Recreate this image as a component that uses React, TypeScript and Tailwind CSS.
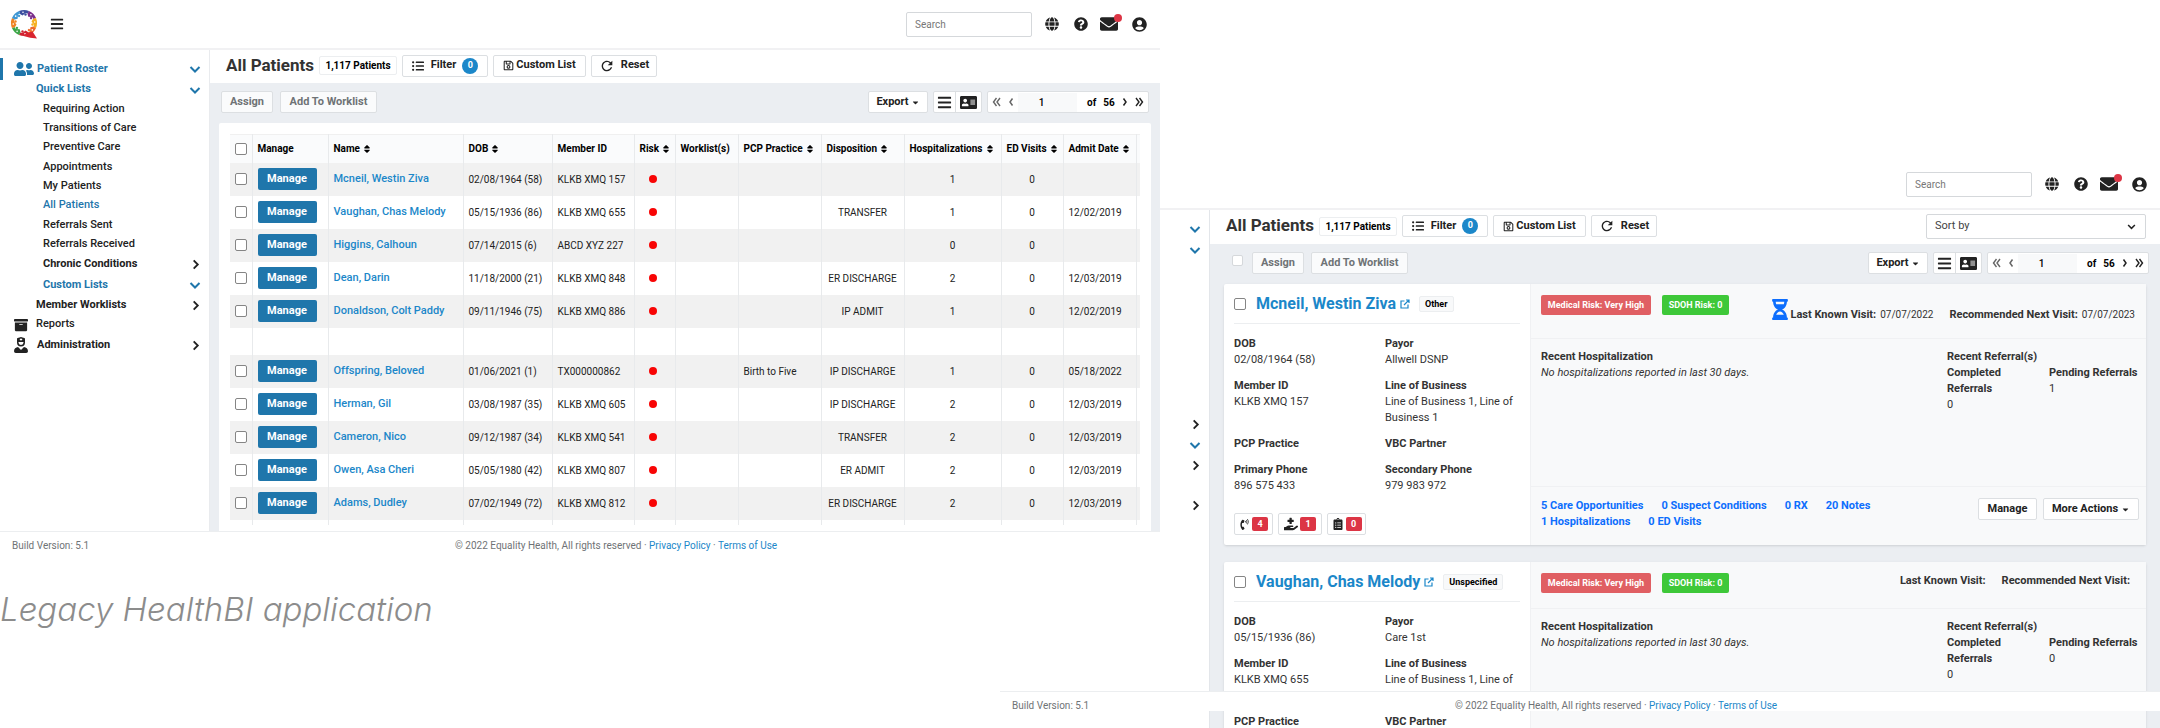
import type { ReactNode } from "react";
import { FaUserFriends, FaArchive, FaGlobe, FaQuestionCircle, FaEnvelope, FaUserCircle, FaBars, FaListUl, FaRegSave, FaSort, FaAddressCard, FaCaretDown, FaUserNurse, FaHourglassHalf, FaHandHoldingMedical, FaClipboardList, FaPhoneVolume } from "react-icons/fa";
import { MdRefresh } from "react-icons/md";

type Tone = "blue" | "dark";

function Chevron({ dir, tone = "dark", size = 12 }: { dir: "down" | "right"; tone?: Tone; size?: number }) {
  const d = dir === "down" ? "M3 8l9 9 9-9" : "M8 3l9 9-9 9";
  const color = tone === "blue" ? "text-[#1f76ab]" : "text-[#222]";
  return (
    <svg width={size} height={size} viewBox="0 0 24 24" fill="none" stroke="currentColor" strokeWidth="4" className={color}>
      <path d={d} />
    </svg>
  );
}

function DoubleAngle({ flip = false }: { flip?: boolean }) {
  return (
    <svg width="9" height="10" viewBox="0 0 18 20" fill="none" stroke="currentColor" strokeWidth="2.8" className={flip ? "text-[#666]" : "text-[#222]"}>
      <path d={flip ? "M9 2L3 10l6 8M16 2l-6 8 6 8" : "M2 2l6 8-6 8M9 2l6 8-6 8"} />
    </svg>
  );
}

function SingleAngle({ flip = false }: { flip?: boolean }) {
  return (
    <svg width="6" height="10" viewBox="0 0 12 20" fill="none" stroke="currentColor" strokeWidth="3" className={flip ? "text-[#666]" : "text-[#222]"}>
      <path d={flip ? "M9 3l-5 7 5 7" : "M3 3l5 7-5 7"} />
    </svg>
  );
}

function Logo() {
  const parts = [
    { a: 0, c: "#3b4f9f" },
    { a: 45, c: "#7b2f8c" },
    { a: 90, c: "#f5b01f" },
    { a: 135, c: "#ee6a2a" },
    { a: 180, c: "#d0202f" },
    { a: 225, c: "#3da648" },
    { a: 270, c: "#f08322" },
    { a: 315, c: "#3f97d3" },
  ];
  return (
    <svg width="28" height="30" viewBox="0 0 56 60" role="img" aria-label="Equality Health">
      {parts.map((p) => (
        <g key={p.a} transform={`rotate(${p.a} 28 28)`}>
          <path d="M18 4A26 26 0 0 1 38 4L36 9L31 8L25 13L20 10Z" fill={p.c} />
          <circle cx="31" cy="11" r="2.400" fill={p.c} />
          <circle cx="26" cy="6.500" r="1.600" fill="#fff" />
        </g>
      ))}
      <path d="M32 49L45 45L54 59Q40 58 27 54Z" fill="#d9242f" />
    </svg>
  );
}

function TopBar({ withBrand = false, id }: { withBrand?: boolean; id: string }) {
  return (
    <header className="flex h-[50px] items-center border-b-2 border-[#f1f1f3] bg-white pr-[13px] pl-[10px]">
      {withBrand && (
        <div className="flex items-center gap-3">
          <Logo />
          <button type="button" aria-label="Toggle menu">
            <FaBars className="size-[14px] text-[#222]" />
          </button>
        </div>
      )}
      <div className="ml-auto flex items-center">
        <input id={id} type="search" aria-label="Search" placeholder="Search" className="h-[25px] w-[126px] rounded-[2px] border border-[#d5d8db] bg-white px-2 text-[10px] placeholder:text-[#777]" />
        <button type="button" aria-label="Language" className="ml-[13px]"><FaGlobe className="size-[14px] text-[#222]" /></button>
        <button type="button" aria-label="Help" className="ml-[15px]"><FaQuestionCircle className="size-[14px] text-[#222]" /></button>
        <button type="button" aria-label="Messages" className="relative ml-[12px]">
          <FaEnvelope className="size-[18px] text-[#222]" />
          <span className="absolute -top-px -right-1 size-2 rounded-full bg-[#dc3545]" />
        </button>
        <button type="button" aria-label="Account" className="ml-[14px]"><FaUserCircle className="size-[15px] text-[#222]" /></button>
      </div>
    </header>
  );
}

const btnBase = "flex h-[22px] items-center justify-center rounded-[2px] border border-[#dcdfe2] font-bold text-[11px]";
const btn = btnBase + " bg-white text-[#222]";
const btnOff = btnBase + " bg-[#fafbfc] text-[#6f7376]";

function TitleBar({ sort = false }: { sort?: boolean }) {
  return (
    <div className={(sort ? "h-[34px]" : "h-[33px]") + " flex items-center bg-white pr-[14px] pb-[2px] pl-4"}>
      <h1 className="w-[93px] text-[17px] font-bold whitespace-nowrap text-[#333]">All Patients</h1>
      <span className="flex h-[19px] w-[78px] items-center justify-center rounded-[2px] border border-[#eceef0] text-[10px] font-bold">1,117 Patients</span>
      <button type="button" className={btn + " ml-[5px] w-[86px] gap-[7px]"}>
        <FaListUl className="size-3" />
        Filter
        <span className="-ml-px flex size-4 items-center justify-center rounded-full bg-[#1b87c9] text-[9px] text-white">0</span>
      </button>
      <button type="button" className={btn + " ml-[5px] w-[93px] gap-[2px]"}>
        <FaRegSave className="size-[11px]" />
        Custom List
      </button>
      <button type="button" className={btn + " ml-[5px] w-[66px] gap-[6px]"}>
        <MdRefresh className="size-4" />
        Reset
      </button>
      {sort && (
        <div className="relative ml-auto">
          <select aria-label="Sort by" className="block h-[25px] w-[220px] appearance-none rounded-[2px] border border-[#d5d8db] bg-white px-2 text-[11px] text-[#444]">
            <option>Sort by</option>
          </select>
          <span className="pointer-events-none absolute top-2 right-[10px]">
            <Chevron dir="down" size={9} />
          </span>
        </div>
      )}
    </div>
  );
}

function ActionBar({ selectAll = false }: { selectAll?: boolean }) {
  return (
    <div className="flex h-10 items-center pr-[11px] pb-[2px] pl-[11px]">
      {selectAll && <input type="checkbox" aria-label="Select all" className="mr-[9px] mb-[5px] ml-[11px] size-[11px] appearance-none rounded-[2px] border border-[#d5d8db] bg-white" />}
      <button type="button" disabled className={btnOff + " w-[52px]"}>Assign</button>
      <button type="button" disabled className={btnOff + " ml-[7px] w-[97px]"}>Add To Worklist</button>
      <button type="button" className={btn + " ml-auto w-[60px] gap-[2px]"}>
        Export
        <FaCaretDown className="size-[9px]" />
      </button>
      <div className="ml-[5px] flex h-[22px] w-[49px] rounded-[2px] border border-[#dcdfe2] bg-white">
        <button type="button" aria-label="List view" className="flex w-[22px] items-center justify-center border-r border-[#dcdfe2]"><FaBars className="size-[15px] text-[#222]" /></button>
        <button type="button" aria-label="Card view" className="flex flex-1 items-center justify-center"><FaAddressCard className="size-[17px] text-[#222]" /></button>
      </div>
      <div className="ml-[5px] flex h-[22px] w-[162px] items-center rounded-[2px] border border-[#dcdfe2] bg-white text-[10px] font-bold">
        <button type="button" aria-label="First page" className="ml-1"><DoubleAngle flip /></button>
        <button type="button" aria-label="Previous page" className="ml-[7px]"><SingleAngle flip /></button>
        <input type="text" aria-label="Page" defaultValue="1" className="ml-1 h-[19px] w-[59px] bg-[#f8f9fa] pr-3 text-center font-medium" />
        <span className="ml-[10px]">of</span>
        <span className="ml-[7px]">56</span>
        <button type="button" aria-label="Next page" className="ml-[7px]"><SingleAngle /></button>
        <button type="button" aria-label="Last page" className="ml-[7px]"><DoubleAngle /></button>
      </div>
    </div>
  );
}

const quickLists = ["Requiring Action", "Transitions of Care", "Preventive Care", "Appointments", "My Patients", "All Patients", "Referrals Sent", "Referrals Received"];

function Sidebar() {
  return (
    <nav className="w-[210px] shrink-0 border-r border-[#e9ebee] bg-white pt-2 text-[11px] font-medium text-[#222]">
      <a href="#roster" className="flex h-[22px] items-center border-l-3 border-[#1f76ab] pr-2 pl-[11px] font-bold text-[#1f76ab]">
        <FaUserFriends className="mr-[3px] size-5" />
        Patient Roster
        <span className="ml-auto"><Chevron dir="down" tone="blue" /></span>
      </a>
      <a href="#quick" className="flex h-[19px] items-center pr-2 pl-[36px] font-bold text-[#1f76ab]">
        Quick Lists
        <span className="ml-auto"><Chevron dir="down" tone="blue" /></span>
      </a>
      <ul className="pl-[43px]">
        {quickLists.map((q, i) => (
          <li key={q} className={i % 3 === 2 ? "h-5 leading-5" : "h-[19px] leading-[19px]"}>
            <a href="#list" className={q === "All Patients" ? "text-[#1f76ab]" : ""}>{q}</a>
          </li>
        ))}
      </ul>
      <a href="#chronic" className="flex h-[22px] items-center pr-2 pl-[43px] font-bold">
        Chronic Conditions
        <span className="ml-auto"><Chevron dir="right" size={11} /></span>
      </a>
      <a href="#custom" className="flex h-5 items-center pr-2 pl-[43px] font-bold text-[#1f76ab]">
        Custom Lists
        <span className="ml-auto"><Chevron dir="down" tone="blue" /></span>
      </a>
      <a href="#worklists" className="flex h-5 items-center pr-2 pl-[36px] font-bold">
        Member Worklists
        <span className="ml-auto"><Chevron dir="right" size={11} /></span>
      </a>
      <a href="#reports" className="flex h-[19px] items-center pl-[14px]">
        <FaArchive className="mr-2 size-[14px]" />
        Reports
      </a>
      <a href="#admin" className="flex h-[22px] items-center pr-2 pl-[13px] font-bold">
        <FaUserNurse className="mr-2 size-4" />
        Administration
        <span className="ml-auto"><Chevron dir="right" size={11} /></span>
      </a>
    </nav>
  );
}

interface Patient {
  name: string;
  dob: string;
  member: string;
  practice?: string;
  disposition?: string;
  hosp: number;
  admit?: string;
}

const patients: (Patient | null)[] = [
  { name: "Mcneil, Westin Ziva", dob: "02/08/1964 (58)", member: "KLKB XMQ 157", hosp: 1 },
  { name: "Vaughan, Chas Melody", dob: "05/15/1936 (86)", member: "KLKB XMQ 655", disposition: "TRANSFER", hosp: 1, admit: "12/02/2019" },
  { name: "Higgins, Calhoun", dob: "07/14/2015 (6)", member: "ABCD XYZ 227", hosp: 0 },
  { name: "Dean, Darin", dob: "11/18/2000 (21)", member: "KLKB XMQ 848", disposition: "ER DISCHARGE", hosp: 2, admit: "12/03/2019" },
  { name: "Donaldson, Colt Paddy", dob: "09/11/1946 (75)", member: "KLKB XMQ 886", disposition: "IP ADMIT", hosp: 1, admit: "12/02/2019" },
  null,
  { name: "Offspring, Beloved", dob: "01/06/2021 (1)", member: "TX000000862", practice: "Birth to Five", disposition: "IP DISCHARGE", hosp: 1, admit: "05/18/2022" },
  { name: "Herman, Gil", dob: "03/08/1987 (35)", member: "KLKB XMQ 605", disposition: "IP DISCHARGE", hosp: 2, admit: "12/03/2019" },
  { name: "Cameron, Nico", dob: "09/12/1987 (34)", member: "KLKB XMQ 541", disposition: "TRANSFER", hosp: 2, admit: "12/03/2019" },
  { name: "Owen, Asa Cheri", dob: "05/05/1980 (42)", member: "KLKB XMQ 807", disposition: "ER ADMIT", hosp: 2, admit: "12/03/2019" },
  { name: "Adams, Dudley", dob: "07/02/1949 (72)", member: "KLKB XMQ 812", disposition: "ER DISCHARGE", hosp: 2, admit: "12/03/2019" },
];

const columns: { label: string; sort?: boolean }[] = [
  { label: "Manage" },
  { label: "Name", sort: true },
  { label: "DOB", sort: true },
  { label: "Member ID" },
  { label: "Risk", sort: true },
  { label: "Worklist(s)" },
  { label: "PCP Practice", sort: true },
  { label: "Disposition", sort: true },
  { label: "Hospitalizations", sort: true },
  { label: "ED Visits", sort: true },
  { label: "Admit Date", sort: true },
];

const check = "block size-3 appearance-none rounded-[2px] border border-[#858585] bg-white";
const cell = "border-r border-[#e8eaec] pl-[5px]";

function PatientTable() {
  return (
    <table className="w-full table-fixed border-collapse text-left text-[10px] whitespace-nowrap text-[#222]">
      <colgroup>
        <col className="w-[22px]" />
        <col className="w-[76px]" />
        <col className="w-[135px]" />
        <col className="w-[89px]" />
        <col className="w-[82px]" />
        <col className="w-[41px]" />
        <col className="w-[63px]" />
        <col className="w-[83px]" />
        <col className="w-[83px]" />
        <col className="w-[97px]" />
        <col className="w-[62px]" />
        <col className="w-[73px]" />
        <col />
      </colgroup>
      <thead>
        <tr className="h-7 border-t border-[#f0f0f0] bg-[#fafbfc]">
          <th className={cell}><input type="checkbox" aria-label="Select all patients" className={check} /></th>
          {columns.map((c) => (
            <th key={c.label} className={cell + " text-black"}>
              <span className="flex items-center gap-[2px]">
                {c.label}
                {c.sort && <FaSort className="size-[10px] shrink-0" />}
              </span>
            </th>
          ))}
          <th />
        </tr>
      </thead>
      <tbody>
        {patients.map((p, i) =>
          p === null ? (
            <tr key={i} className="h-[27px]">
              {[...columns, null].map((_, k) => <td key={k} className={cell} />)}
              <td />
            </tr>
          ) : (
            <tr key={i} className={i % 2 === 0 ? "h-[33px] bg-[#f1f1f1]" : "h-[33px]"}>
              <td className={cell}><input type="checkbox" aria-label={"Select " + p.name} className={check} /></td>
              <td className={cell}>
                <button type="button" className="h-[22px] w-[59px] rounded-[2px] bg-[#1f76ab] text-[11px] font-bold text-white">Manage</button>
              </td>
              <td className={cell}><a href="#patient" className="text-[11px] font-medium text-[#1b87c9]">{p.name}</a></td>
              <td className={cell}>{p.dob}</td>
              <td className={cell}>{p.member}</td>
              <td className="border-r border-[#e8eaec] pr-1"><span className="mx-auto block size-2 rounded-full bg-[#f80505]" /></td>
              <td className={cell} />
              <td className={cell}>{p.practice}</td>
              <td className={cell + " pr-[5px] text-center"}>{p.disposition}</td>
              <td className={cell + " pr-[5px] text-center"}>{p.hosp}</td>
              <td className={cell + " pr-[5px] text-center"}>0</td>
              <td className={cell}>{p.admit}</td>
              <td />
            </tr>
          ),
        )}
        <tr className="h-[5px]">
          {[...columns, null].map((_, k) => <td key={k} className={cell} />)}
          <td />
        </tr>
      </tbody>
    </table>
  );
}

function FooterText() {
  return (
    <>
      <p>Build Version: 5.1</p>
      <p>
        © 2022 Equality Health, All rights reserved · <a href="#privacy" className="text-[#1b87c9]">Privacy Policy</a> · <a href="#terms" className="text-[#1b87c9]">Terms of Use</a>
      </p>
    </>
  );
}

const footerBox = "grid grid-cols-[39%_1fr] border-t border-[#eceef0] bg-white px-3 pt-[6px] text-[10px] text-[#6f7376]";

function Field({ label, nowrap = false, children }: { label: string; nowrap?: boolean; children?: ReactNode }) {
  return (
    <div>
      <dt className={nowrap ? "font-bold whitespace-nowrap" : "font-bold"}>{label}</dt>
      {children !== undefined && <dd>{children}</dd>}
    </div>
  );
}

interface CardProps {
  name: string;
  tag: string;
  dob: string;
  member: string;
  payor: string;
  phones?: [string, string];
  chipCounts?: [number, number, number];
  stats?: string[][];
  lastVisit?: string;
  nextVisit?: string;
  pending: number;
}

function PatientCard(p: CardProps) {
  const chips = p.chipCounts
    ? [
        { icon: <FaPhoneVolume className="size-[11px]" />, n: p.chipCounts[0], label: "Calls", w: "w-[39px]" },
        { icon: <FaHandHoldingMedical className="size-[14px]" />, n: p.chipCounts[1], label: "Care", w: "w-[44px]" },
        { icon: <FaClipboardList className="size-3" />, n: p.chipCounts[2], label: "Tasks", w: "w-[39px]" },
      ]
    : [];
  return (
    <article className="flex min-h-[261px] rounded-[2px] bg-white text-[11px] leading-4 text-[#333] shadow-sm">
      <div className="w-[306px] shrink-0 px-[10px]">
        <div className="flex h-10 items-center border-b border-[#eceef0]">
          <input type="checkbox" aria-label={"Select " + p.name} className={check} />
          <a href="#patient" className="ml-[10px] text-[16px] font-bold text-[#1b87c9]">{p.name}</a>
          <svg viewBox="0 0 20 20" className="ml-1 size-[10px] text-[#1b87c9]" fill="none" stroke="currentColor" strokeWidth="2.4">
            <path d="M9 4H2v14h14v-7M12 2h6v6M18 2L8 12" />
          </svg>
          <span className="ml-[9px] flex h-4 items-center rounded-[2px] border border-[#eceef0] bg-[#f8f9fa] px-[5px] text-[9px] font-bold text-black">{p.tag}</span>
        </div>
        <dl className="mt-3 grid grid-cols-[151px_1fr] gap-y-[10px]">
          <Field label="DOB">{p.dob}</Field>
          <Field label="Payor">{p.payor}</Field>
          <Field label="Member ID">{p.member}</Field>
          <Field label="Line of Business">Line of Business 1, Line of Business 1</Field>
          <Field label="PCP Practice" />
          <Field label="VBC Partner" />
          {p.phones && <Field label="Primary Phone">{p.phones[0]}</Field>}
          {p.phones && <Field label="Secondary Phone">{p.phones[1]}</Field>}
        </dl>
        {chips.length > 0 && (
          <div className="mt-[19px] flex gap-[5px]">
            {chips.map((c) => (
              <button key={c.label} type="button" aria-label={c.label} className={c.w + " flex h-[22px] items-center justify-center gap-[2px] rounded-[2px] border border-[#dcdfe2] text-[#222]"}>
                {c.icon}
                <span className="flex h-[14px] w-4 items-center justify-center rounded-[2px] bg-[#dc3545] text-[9px] font-bold text-white">{c.n}</span>
              </button>
            ))}
          </div>
        )}
      </div>
      <div className="flex min-w-0 flex-1 flex-col border-l border-[#f0f1f3] bg-[#f8f9fa]">
        <div className={(p.lastVisit ? "h-[55px]" : "h-[47px]") + " flex border-b border-[#f0f1f3] pt-[11px] pr-[11px] pl-[10px]"}>
          <span className="flex h-5 w-[110px] items-center justify-center rounded-[2px] bg-[#e05f63] text-[9px] font-bold text-white">Medical Risk: Very High</span>
          <span className="ml-[11px] flex h-5 w-[67px] items-center justify-center rounded-[2px] bg-[#3ec839] text-[9px] font-bold text-white">SDOH Risk: 0</span>
          <div className={(p.lastVisit ? "pt-3" : "pr-[5px]") + " ml-auto flex gap-4"}>
            <p className="flex">
              {p.lastVisit && <FaHourglassHalf className="-mt-2 h-[21px] w-4 text-[#0d6efd]" />}
              <b className="ml-[2px]">Last Known Visit:</b>
              {p.lastVisit && <span className="ml-1 text-[10px]">{p.lastVisit}</span>}
            </p>
            <p className="flex">
              <b>Recommended Next Visit:</b>
              {p.nextVisit && <span className="ml-1 text-[10px]">{p.nextVisit}</span>}
            </p>
          </div>
        </div>
        <div className="flex flex-1 pt-[10px] pr-[11px] pl-[10px]">
          <div>
            <p className="font-bold">Recent Hospitalization</p>
            <p className="italic">No hospitalizations reported in last 30 days.</p>
          </div>
          <div className="ml-auto w-[188px]">
            <p className="font-bold">Recent Referral(s)</p>
            <dl className="grid grid-cols-[76px_1fr] gap-x-[26px]">
              <Field label="Completed Referrals">0</Field>
              <Field label="Pending Referrals" nowrap>{p.pending}</Field>
            </dl>
          </div>
        </div>
        {p.stats && (
          <div className="flex h-[59px] border-t border-[#f0f1f3] pt-[11px] pr-[7px] pl-[10px]">
            <div>
              {p.stats.map((row) => (
                <p key={row[0]} className="flex gap-[18px] font-bold text-[#0d6efd]">
                  {row.map((s) => <a key={s} href="#stat">{s}</a>)}
                </p>
              ))}
            </div>
            <button type="button" className={btn + " ml-auto w-[59px]"}>Manage</button>
            <button type="button" className={btn + " ml-[6px] w-[96px] gap-[3px]"}>
              More Actions
              <FaCaretDown className="size-[9px]" />
            </button>
          </div>
        )}
      </div>
    </article>
  );
}

const railIcons: { dir: "down" | "right"; tone: Tone; h: string }[] = [
  { dir: "down", tone: "blue", h: "h-[22px]" },
  { dir: "down", tone: "blue", h: "h-[19px] mb-[154px]" },
  { dir: "right", tone: "dark", h: "h-[22px]" },
  { dir: "down", tone: "blue", h: "h-5" },
  { dir: "right", tone: "dark", h: "h-5 mb-[19px]" },
  { dir: "right", tone: "dark", h: "h-[22px]" },
];

export default function App() {
  return (
    <div className="flex h-screen overflow-hidden bg-white font-['Roboto',sans-serif]">
      <div className="min-w-0 flex-[1160_1_0%]">
        <TopBar withBrand id="search-list" />
        <div className="flex">
          <Sidebar />
          <main className="min-w-0 flex-1">
            <TitleBar />
            <div className="bg-[#ebeef2]">
              <ActionBar />
              <section className="mr-[9px] ml-[9px] h-[408px] rounded-t-[2px] bg-white pt-[11px] pr-[11px] pl-[11px]">
                <PatientTable />
              </section>
            </div>
          </main>
        </div>
        <footer className={footerBox}>
          <FooterText />
        </footer>
        <p className="mt-8 font-['Inter',sans-serif] text-[33px] leading-[48px] font-light text-[#8c8c8c] italic">Legacy HealthBI application</p>
      </div>
      <div className="relative min-w-0 flex-[1000_1_0%] pt-[160px]">
        <TopBar id="search-cards" />
        <div className="flex">
          <nav aria-label="Sections" className="flex w-[50px] shrink-0 flex-col items-end border-r border-[#e3e6ea] bg-white pt-2 pr-2">
            {railIcons.map((r, i) => (
              <button key={i} type="button" aria-label="Toggle section" className={r.h + " flex items-center"}>
                <Chevron dir={r.dir} tone={r.tone} size={r.dir === "down" ? 12 : 11} />
              </button>
            ))}
          </nav>
          <main className="min-w-0 flex-1 bg-[#ebeef2]">
            <TitleBar sort />
            <ActionBar selectAll />
            <div className="flex flex-col gap-[17px] pr-[14px] pl-[14px]">
              <PatientCard
                name="Mcneil, Westin Ziva"
                tag="Other"
                dob="02/08/1964 (58)"
                member="KLKB XMQ 157"
                payor="Allwell DSNP"
                phones={["896 575 433", "979 983 972"]}
                chipCounts={[4, 1, 0]}
                stats={[["5 Care Opportunities", "0 Suspect Conditions", "0 RX", "20 Notes"], ["1 Hospitalizations", "0 ED Visits"]]}
                lastVisit="07/07/2022"
                nextVisit="07/07/2023"
                pending={1}
              />
              <PatientCard name="Vaughan, Chas Melody" tag="Unspecified" dob="05/15/1936 (86)" member="KLKB XMQ 655" payor="Care 1st" pending={0} />
            </div>
          </main>
        </div>
        <footer className={footerBox + " absolute top-[691px] right-0 -left-[160px] h-5"}>
          <FooterText />
        </footer>
      </div>
    </div>
  );
}
